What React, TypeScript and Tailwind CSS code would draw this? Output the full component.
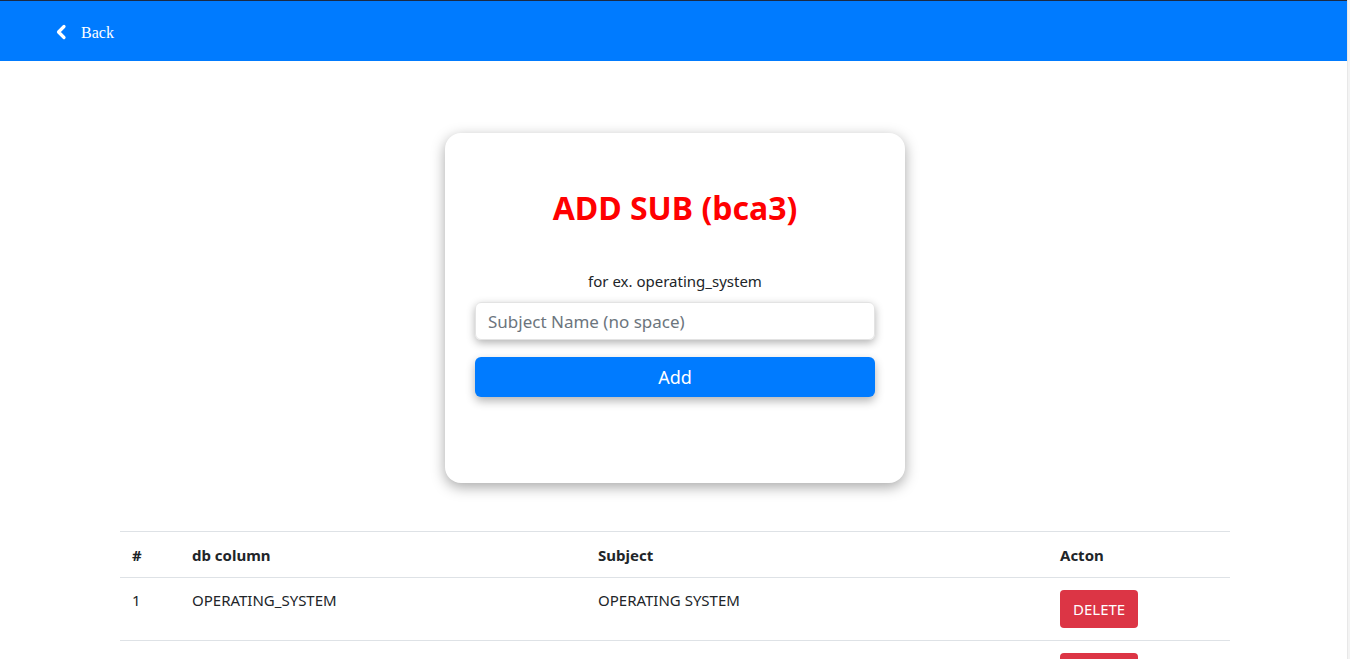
import React from "react";

const sans = { fontFamily: '"Noto Sans", "Open Sans", sans-serif' };

export default function App() {
  return (
    <div className="relative min-h-[659px] w-full bg-white flex flex-col" style={sans}>
      <nav className="h-[61px] bg-[#007bff] border-t border-[#1b2a44] flex items-center pl-[55px]">
        <div className="flex items-center gap-[14px] text-white mt-[3px]">
          <svg width="12" height="16" viewBox="0 0 12 16" className="mt-[-2px]">
            <path d="M9 2.5 L3.5 8 L9 13.5" fill="none" stroke="white" strokeWidth="3.2" strokeLinecap="round" strokeLinejoin="round" />
          </svg>
          <span className="text-[16px] mt-[1px]" style={{ fontFamily: '"Liberation Serif", serif' }}>Back</span>
        </div>
      </nav>

      <div className="flex justify-center pt-[72px]">
        <div className="w-[460px] h-[350px] bg-white rounded-[16px] shadow-[0_4px_14px_rgba(0,0,0,0.35)] flex flex-col items-center pt-[55px]">
          <h1 className="text-[32px] leading-[40px] font-bold text-[#ff0000]">ADD SUB (bca3)</h1>
          <p className="mt-[42px] text-[15px] leading-[22px] text-[#212529]">for ex. operating_system</p>
          <input
            className="mt-[10px] w-[400px] h-[38px] rounded-[6px] border border-[#e3e3e3] px-[12px] text-[17px] text-[#495057] placeholder:text-[#6c757d] shadow-[0_3px_8px_rgba(0,0,0,0.3)] outline-none"
            placeholder="Subject Name (no space)"
            style={sans}
          />
          <button className="mt-[17px] w-[400px] h-[40px] rounded-[6px] bg-[#007bff] text-white text-[18px] shadow-[0_4px_10px_rgba(0,0,0,0.3)]">
            Add
          </button>
        </div>
      </div>

      <div className="flex justify-center mt-[48px]">
        <table className="w-[1110px] text-[15px] text-[#212529] border-collapse">
          <thead>
            <tr className="border-t border-b border-[#dee2e6]">
              <th className="w-[60px] h-[46px] px-[12px] pt-[2px] text-left font-bold">#</th>
              <th className="w-[406px] px-[12px] pt-[2px] text-left font-bold">db column</th>
              <th className="w-[462px] px-[12px] pt-[2px] text-left font-bold">Subject</th>
              <th className="px-[12px] pt-[2px] text-left font-bold">Acton</th>
            </tr>
          </thead>
          <tbody>
            <tr className="border-b border-[#dee2e6]">
              <td className="px-[12px] pt-[11px] pb-[25px] align-top">1</td>
              <td className="px-[12px] pt-[11px] pb-[25px] align-top">OPERATING_SYSTEM</td>
              <td className="px-[12px] pt-[11px] pb-[25px] align-top">OPERATING SYSTEM</td>
              <td className="px-[12px] py-[12px] align-top">
                <button className="h-[38px] px-[13px] rounded-[4px] bg-[#dc3545] text-white text-[15px]">DELETE</button>
              </td>
            </tr>
            <tr>
              <td className="px-[12px] py-[12px]"></td>
              <td className="px-[12px] py-[12px]"></td>
              <td className="px-[12px] py-[12px]"></td>
              <td className="px-[12px] py-[12px]">
                <button className="h-[38px] px-[13px] rounded-[4px] bg-[#dc3545] text-white text-[15px]">DELETE</button>
              </td>
            </tr>
          </tbody>
        </table>
      </div>
      <div className="absolute top-0 right-0 h-full w-[3px] bg-[#f3f3f3] border-l border-[#e8e8e8]"></div>
    </div>
  );
}
